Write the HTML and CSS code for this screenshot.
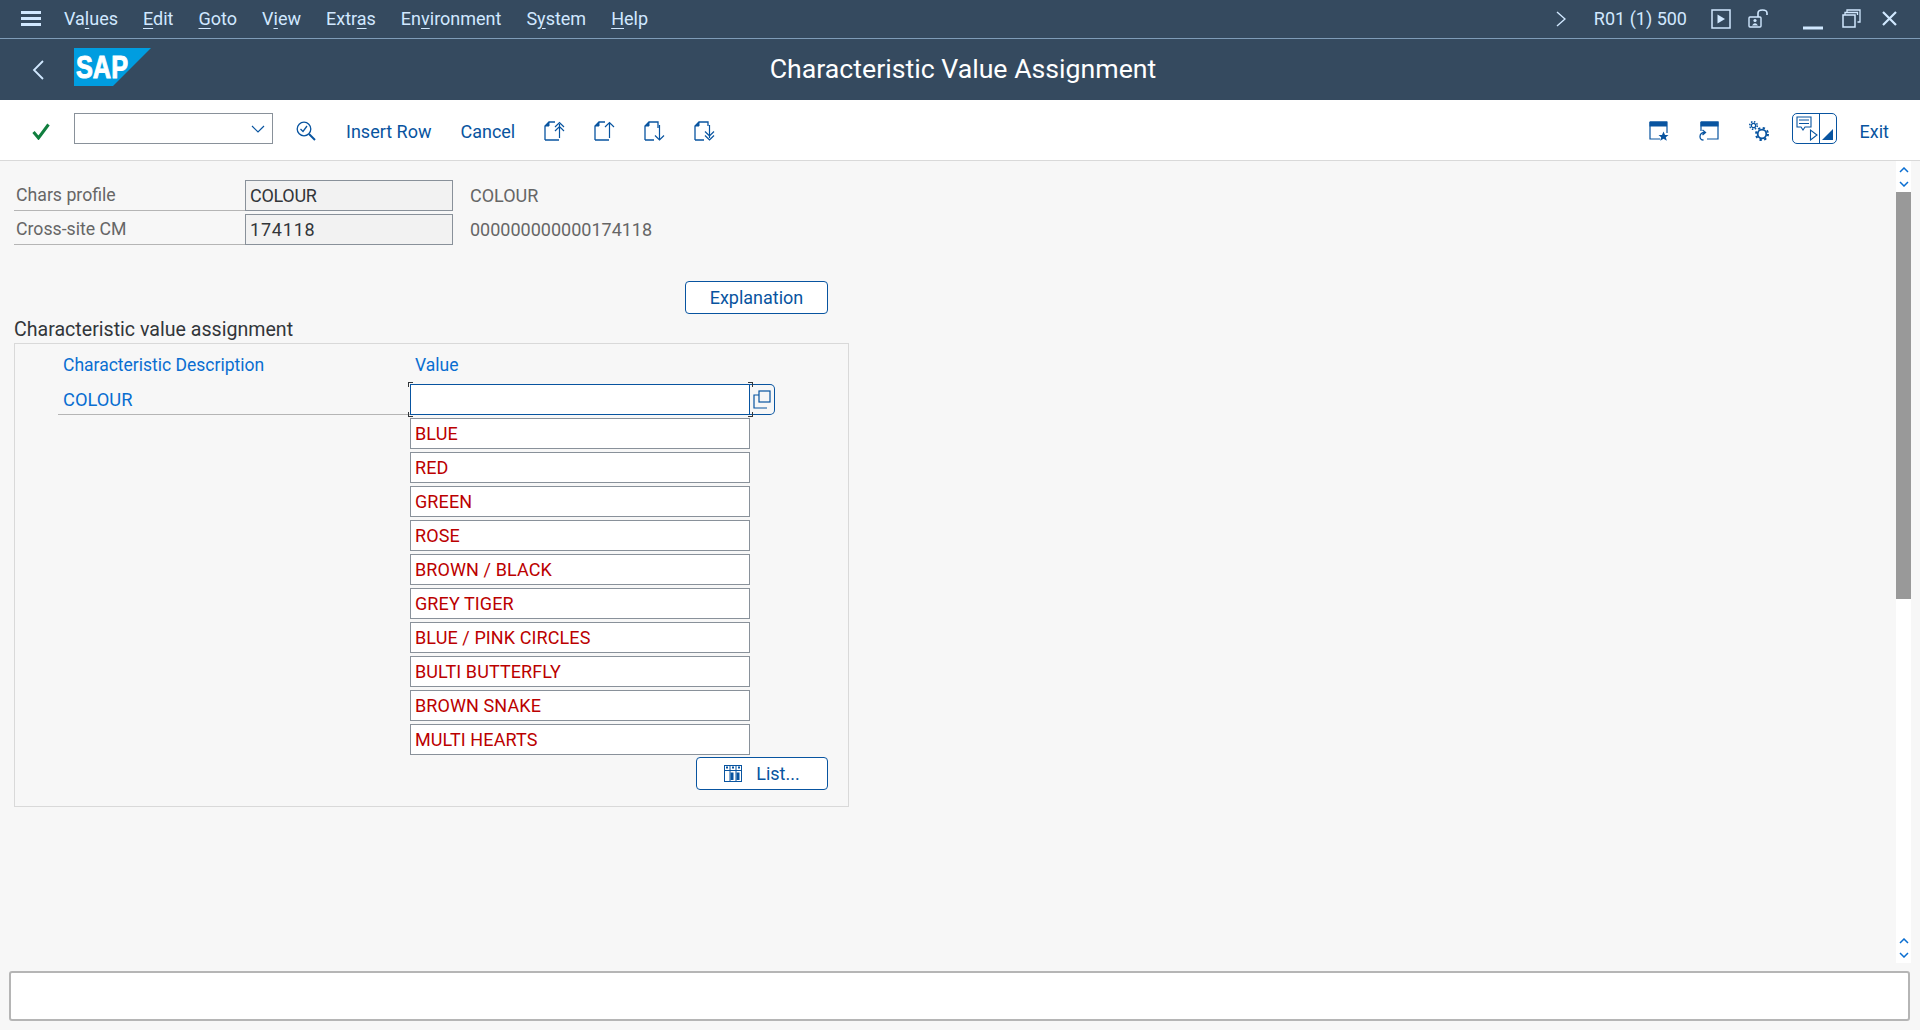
FILE: index.html
```html
<!DOCTYPE html>
<html>
<head>
  <title>Characteristic Value Assignment</title>
  <meta charset="UTF-8">
  <link rel="stylesheet" href="styles.css">
</head>
<body>
  <div class="menubar">
    <svg class="ic-menu" width="20" height="15" viewBox="0 0 20 15"><path d="M0 1.5H20M0 7.5H20M0 13.5H20" stroke="#d1e8ff" stroke-width="3"/></svg>
    <nav class="menu">
      <span>Va<u>l</u>ues</span>
      <span><u>E</u>dit</span>
      <span><u>G</u>oto</span>
      <span>V<u>i</u>ew</span>
      <span>Extr<u>a</u>s</span>
      <span>En<u>v</u>ironment</span>
      <span>S<u>y</u>stem</span>
      <span><u>H</u>elp</span>
    </nav>
    <div class="sysinfo">
      <svg class="ic-more" width="10" height="16" viewBox="0 0 10 16"><path d="M1 1L9 8L1 15" fill="none" stroke="#d1e8ff" stroke-width="1.4"/></svg>
      <span class="sysname">R01 (1) 500</span>
      <svg class="ic-play" width="20" height="20" viewBox="0 0 20 20"><rect x="1" y="1" width="18" height="18" fill="none" stroke="#d1e8ff" stroke-width="1.5"/><path d="M6.500 5.500L14 10L6.500 14.500Z" fill="#d1e8ff"/></svg>
      <svg class="ic-lock" width="20" height="20" viewBox="0 0 20 20"><rect x="1" y="8" width="12" height="10" rx="1" fill="none" stroke="#d1e8ff" stroke-width="1.4"/><circle cx="7" cy="11.500" r="1.600" fill="#d1e8ff"/><path d="M4 16.500Q7 12 10 16.500Z" fill="#d1e8ff"/><path d="M10 8V4Q10 1 14.500 1Q19 1 19 4V6" fill="none" stroke="#d1e8ff" stroke-width="1.600"/></svg>
      <svg class="ic-min" width="20" height="4" viewBox="0 0 20 4"><path d="M0 2H20" stroke="#d1e8ff" stroke-width="3"/></svg>
      <svg class="ic-restore" width="19" height="19" viewBox="0 0 19 19"><rect x="1" y="6" width="12" height="12" fill="none" stroke="#d1e8ff" stroke-width="1.500"/><path d="M5 3.500V1H18V13H15.500M3 6V3.500H15.500V6" fill="none" stroke="#d1e8ff" stroke-width="1.300"/></svg>
      <svg class="ic-close" width="15" height="15" viewBox="0 0 15 15"><path d="M1 1L14 14M14 1L1 14" stroke="#d1e8ff" stroke-width="2.200"/></svg>
    </div>
  </div>

  <div class="titlebar">
    <svg class="ic-back" width="12" height="20" viewBox="0 0 12 20"><path d="M11 1L2 10L11 19" fill="none" stroke="#d1e8ff" stroke-width="1.800"/></svg>
    <svg class="logo" width="77" height="38" viewBox="0 0 77 38"><polygon points="0,0 77,0 39,38 0,38" fill="#009de0"/><text x="2" y="30" textLength="52" lengthAdjust="spacingAndGlyphs">SAP</text></svg>
    <h1>Characteristic Value Assignment</h1>
  </div>

  <div class="toolbar">
    <svg class="ic-check" width="18" height="17" viewBox="0 0 18 17"><path d="M1.500 9L6.500 15L16.500 1.500" fill="none" stroke="#107e3e" stroke-width="3"/></svg>
    <div class="cmd-field">
      <svg width="14" height="8" viewBox="0 0 14 8"><path d="M1 1L7 7L13 1" fill="none" stroke="#0854a0" stroke-width="1.200"/></svg>
    </div>
    <svg class="ic-find" width="20" height="20" viewBox="0 0 20 20"><circle cx="8" cy="8" r="6.800" fill="none" stroke="#0854a0" stroke-width="1.300"/><path d="M4.500 8L7 10.500L11 5" fill="none" stroke="#0854a0" stroke-width="1.300"/><path d="M13 13L19 19" stroke="#0854a0" stroke-width="2"/></svg>
    <a class="tool-text insert">Insert Row</a>
    <a class="tool-text cancel">Cancel</a>
    <svg class="doc first" width="22" height="20" viewBox="0 0 22 20"><path d="M1 19V5L5 1H11M1 19H15" fill="none" stroke="#0854a0" stroke-width="1.300"/><path d="M1 5L5 1V5Z" fill="#0854a0" stroke="#0854a0"/><path d="M15.500 17V3M11 6L15.500 1.500L20 6M11 10L15.500 5.500L20 10" fill="none" stroke="#0854a0" stroke-width="1.200"/></svg>
    <svg class="doc" width="22" height="20" viewBox="0 0 22 20"><path d="M1 19V5L5 1H11M1 19H15" fill="none" stroke="#0854a0" stroke-width="1.300"/><path d="M1 5L5 1V5Z" fill="#0854a0" stroke="#0854a0"/><path d="M15.500 17V1.500M11 6L15.500 1.500L20 6" fill="none" stroke="#0854a0" stroke-width="1.200"/></svg>
    <svg class="doc" width="22" height="20" viewBox="0 0 22 20"><path d="M1 19V5L5 1H14V7M1 19H10" fill="none" stroke="#0854a0" stroke-width="1.300"/><path d="M1 5L5 1V5Z" fill="#0854a0" stroke="#0854a0"/><path d="M15.500 4V19M11 14.500L15.500 19L20 14.500" fill="none" stroke="#0854a0" stroke-width="1.200"/></svg>
    <svg class="doc" width="22" height="20" viewBox="0 0 22 20"><path d="M1 19V5L5 1H14V5M1 19H10" fill="none" stroke="#0854a0" stroke-width="1.300"/><path d="M1 5L5 1V5Z" fill="#0854a0" stroke="#0854a0"/><path d="M15.500 4V17M11 10.500L15.500 15L20 10.500M11 14.500L15.500 19L20 14.500" fill="none" stroke="#0854a0" stroke-width="1.200"/></svg>

    <svg class="win star" width="20" height="20" viewBox="0 0 20 20"><path d="M1 1H18V12M1 1V18H11" fill="none" stroke="#0854a0" stroke-width="1.200"/><rect x="0.500" y="0.500" width="17.500" height="5" fill="#0854a0"/><path d="M14.500 10.500L16 14H19.500L16.800 16.200L17.800 19.800L14.500 17.800L11.200 19.800L12.200 16.200L9.500 14H13Z" fill="#0854a0"/></svg>
    <svg class="win" width="20" height="20" viewBox="0 0 20 20"><path d="M2 1H19V18H8M2 1V10" fill="none" stroke="#0854a0" stroke-width="1.200"/><rect x="1.500" y="0.500" width="18" height="5" fill="#0854a0"/><path d="M6 11.500Q1 11.500 1 15.500Q1 19 4.500 19M3.500 9L6.500 11.500L3.500 14" fill="none" stroke="#0854a0" stroke-width="1.300"/></svg>
    <svg class="win" width="20" height="20" viewBox="0 0 20 20"><circle cx="4.500" cy="4.500" r="2.200" fill="none" stroke="#0854a0" stroke-width="1.300"/><circle cx="4.500" cy="4.500" r="3.800" fill="none" stroke="#0854a0" stroke-width="1.500" stroke-dasharray="1.500 1.480"/><circle cx="13" cy="13" r="4.300" fill="none" stroke="#0854a0" stroke-width="1.800"/><circle cx="13" cy="13" r="6" fill="none" stroke="#0854a0" stroke-width="2" stroke-dasharray="2.300 2.412"/></svg>
    <div class="layout-btn">
      <div class="layout-left">
        <svg width="24" height="25" viewBox="0 0 24 25"><path d="M1 1H15V11H9L7 14L5 11H1Z" fill="none" stroke="#0854a0" stroke-width="1.100"/><path d="M3 4H13M3 7.500H13" stroke="#0854a0" stroke-width="1"/><path d="M14.500 14V24L21 19Z" fill="none" stroke="#0854a0" stroke-width="1.100"/></svg>
      </div>
      <svg class="corner" width="11" height="11" viewBox="0 0 11 11"><path d="M0 11L11 0V11Z" fill="#0854a0"/></svg>
    </div>
    <a class="tool-text exit">Exit</a>
  </div>

  <div class="main">
    <div class="content">
      <div class="field-row">
        <label>Chars profile</label>
        <div class="ro-input">COLOUR</div>
        <span class="ro-text">COLOUR</span>
      </div>
      <div class="field-row">
        <label>Cross-site CM</label>
        <div class="ro-input num">174118</div>
        <span class="ro-text">000000000000174118</span>
      </div>
      <div class="btn-line"><a class="btn explain">Explanation</a></div>
      <div class="group-title">Characteristic value assignment</div>
      <div class="group">
        <div class="value-grid">
          <div class="head">Characteristic Description</div>
          <div class="head value-head">Value</div>
          <div class="char-name">COLOUR</div>
          <div class="value-cell focus"></div>
          <div class="f4">
            <svg width="18" height="20" viewBox="0 0 18 20"><rect x="6" y="1" width="11" height="11" fill="none" stroke="#0854a0" stroke-width="1.200"/><path d="M6 5H1V18H14" fill="none" stroke="#0854a0" stroke-width="1.200"/></svg>
          </div>
          <div class="value-cell item">BLUE</div>
          <div class="value-cell item">RED</div>
          <div class="value-cell item">GREEN</div>
          <div class="value-cell item">ROSE</div>
          <div class="value-cell item">BROWN / BLACK</div>
          <div class="value-cell item">GREY TIGER</div>
          <div class="value-cell item">BLUE / PINK CIRCLES</div>
          <div class="value-cell item">BULTI BUTTERFLY</div>
          <div class="value-cell item">BROWN SNAKE</div>
          <div class="value-cell item">MULTI HEARTS</div>
        </div>
        <div class="btn-line list-line">
          <a class="btn list">
            <svg width="18" height="17" viewBox="0 0 18 17"><rect x="0.500" y="0.500" width="17" height="16" fill="none" stroke="#0854a0"/><path d="M0 5.500H18M6 0V17M12 0V17" stroke="#0854a0"/><path d="M2 2.500H4M8 2.500H10M14 2.500H16" stroke="#0854a0" stroke-width="2"/><path d="M8 7.500V15M14 7.500V15" stroke="#0854a0" stroke-width="3"/></svg>
            List...
          </a>
        </div>
      </div>
    </div>
    <div class="scrollbar">
      <div class="arrows">
        <svg width="10" height="6" viewBox="0 0 10 6"><path d="M1 5L5 1L9 5" fill="none" stroke="#0a6ed1" stroke-width="1.500"/></svg>
        <svg width="10" height="6" viewBox="0 0 10 6"><path d="M1 1L5 5L9 1" fill="none" stroke="#0a6ed1" stroke-width="1.500"/></svg>
      </div>
      <div class="thumb"></div>
      <div class="arrows bottom">
        <svg width="10" height="6" viewBox="0 0 10 6"><path d="M1 5L5 1L9 5" fill="none" stroke="#0a6ed1" stroke-width="1.500"/></svg>
        <svg width="10" height="6" viewBox="0 0 10 6"><path d="M1 1L5 5L9 1" fill="none" stroke="#0a6ed1" stroke-width="1.500"/></svg>
      </div>
    </div>
  </div>

  <div class="statusbar"><div class="status-box"></div></div>
</body>
</html>
```

FILE: styles.css
```css
* {
  box-sizing: border-box;
}
body {
  margin: 0;
  height: 100vh;
  display: flex;
  flex-direction: column;
  overflow: hidden;
  background: #f7f7f7;
  font-family: Roboto, "Noto Sans", Arial, sans-serif;
  font-size: 18px;
  color: #32363a;
}
svg {
  display: block;
  flex: none;
}

/* top bars */
.menubar {
  height: 39px;
  flex: none;
  display: flex;
  align-items: center;
  padding: 0 23px 1px 21px;
  background: #354a5f;
  border-bottom: 1px solid #7f9cb8;
  color: #d1e8ff;
}
.menu {
  display: flex;
  gap: 25px;
  margin-left: 23px;
}
.menu u {
  text-underline-offset: 3px;
}
.sysinfo {
  margin-left: auto;
  display: flex;
  align-items: center;
}
.sysname {
  margin-left: 28px;
}
.ic-play {
  margin-left: 24px;
}
.ic-lock {
  margin-left: 17px;
}
.ic-min {
  margin-left: 35px;
  margin-top: 18px;
}
.ic-restore {
  margin-left: 19px;
}
.ic-close {
  margin-left: 21px;
}
.titlebar {
  height: 61px;
  flex: none;
  position: relative;
  display: flex;
  align-items: center;
  padding-left: 32px;
  background: #354a5f;
}
.logo {
  margin-left: 30px;
  margin-top: -5px;
}
.logo text {
  font-family: "Liberation Sans", Arial, sans-serif;
  font-weight: bold;
  font-size: 31px;
  fill: #fff;
  stroke: #fff;
  stroke-width: 1px;
}
.titlebar h1 {
  position: absolute;
  left: 0;
  right: 0;
  top: 15px;
  margin: 0;
  padding-left: 6px;
  text-align: center;
  font-size: 26.700px;
  line-height: 30px;
  font-weight: 400;
  color: #fff;
}

/* toolbar */
.toolbar {
  height: 61px;
  flex: none;
  display: flex;
  align-items: center;
  padding: 2px 31px 0 32px;
  background: #fff;
  border-bottom: 1px solid #d9d9d9;
  color: #0854a0;
}
.cmd-field {
  width: 199px;
  height: 31px;
  margin-left: 24px;
  margin-top: -6px;
  display: flex;
  align-items: center;
  justify-content: flex-end;
  padding: 2px 7px 0 0;
  background: #fff;
  border: 1px solid #89919a;
}
.ic-find {
  margin-left: 23px;
}
.tool-text.insert {
  margin-left: 30px;
}
.tool-text.cancel {
  margin-left: 29px;
}
.doc {
  margin-left: 28px;
}
.doc.first {
  margin-left: 29px;
}
.win {
  margin-left: 30px;
}
.win.star {
  margin-left: auto;
}
.layout-btn {
  width: 45px;
  height: 31px;
  margin-left: 23px;
  margin-top: -5px;
  display: flex;
  background: #fff;
  border: 1px solid #0854a0;
  border-radius: 5px;
}
.layout-left {
  width: 27px;
  padding: 2px 0 0 3px;
  border-right: 1px solid #0854a0;
}
.corner {
  margin: 15px 0 0 2px;
}
.tool-text.exit {
  margin-left: 23px;
}

/* main area */
.main {
  flex: 1;
  display: flex;
  justify-content: space-between;
  min-height: 0;
  padding-right: 9px;
}
.content {
  width: 849px;
  padding: 19px 0 0 14px;
}
.field-row {
  display: flex;
  align-items: center;
  height: 31px;
  margin-bottom: 3px;
}
.field-row label {
  width: 231px;
  height: 31px;
  line-height: 31px;
  padding-left: 2px;
  font-size: 17.700px;
  color: #666;
  border-bottom: 1px solid #b5b5b5;
}
.ro-input {
  width: 208px;
  height: 31px;
  line-height: 29px;
  padding-left: 4px;
  background: #f2f2f2;
  border: 1px solid #89919a;
  letter-spacing: -0.300px;
}
.ro-input.num {
  letter-spacing: 0.800px;
}
.ro-text {
  margin-left: 17px;
  color: #666;
}
.btn-line {
  display: flex;
  justify-content: flex-end;
  width: 814px;
}
.btn {
  height: 33px;
  display: flex;
  align-items: center;
  justify-content: center;
  background: #fff;
  border: 1px solid #0854a0;
  border-radius: 4px;
  color: #0854a0;
}
.btn.explain {
  width: 143px;
  margin-top: 33px;
}
.group-title {
  height: 29px;
  line-height: 31px;
  font-size: 19.600px;
}
.group {
  width: 835px;
  height: 464px;
  padding: 6px 20px 0 43px;
  border: 1px solid #d9d9d9;
}
.value-grid {
  display: grid;
  grid-template-columns: 352px 340px 25px;
  grid-auto-rows: 31px;
  row-gap: 3px;
}
.head,
.char-name {
  line-height: 31px;
  padding-left: 5px;
  color: #0a6ed1;
}
.head {
  font-size: 17.500px;
}
.value-head {
  grid-column: 2 / span 2;
}
.char-name {
  border-bottom: 1px solid #b5b5b5;
  height: 31px;
  font-size: 18.300px;
}
.value-cell {
  grid-column: 2;
  position: relative;
  padding-left: 4px;
  line-height: 29px;
  background: #fff;
  border: 1px solid #89919a;
}
.value-cell.item {
  color: #b00;
  letter-spacing: 0.100px;
}
.value-cell.focus {
  border-color: #0854a0;
  border-width: 1.500px;
}
.value-cell.focus::before {
  content: "";
  position: absolute;
  inset: -3px -4px -3px -3px;
  background:
    linear-gradient(#32363a, #32363a) left top / 5px 1px no-repeat,
    linear-gradient(#32363a, #32363a) left top / 1px 5px no-repeat,
    linear-gradient(#32363a, #32363a) right top / 5px 1px no-repeat,
    linear-gradient(#32363a, #32363a) right top / 1px 5px no-repeat,
    linear-gradient(#32363a, #32363a) left bottom / 5px 1px no-repeat,
    linear-gradient(#32363a, #32363a) left bottom / 1px 5px no-repeat,
    linear-gradient(#32363a, #32363a) right bottom / 5px 1px no-repeat,
    linear-gradient(#32363a, #32363a) right bottom / 1px 5px no-repeat;
}
.f4 {
  display: flex;
  align-items: center;
  justify-content: center;
  border: 1px solid #0854a0;
  border-left: 0;
  border-radius: 0 5px 5px 0;
}
.list-line {
  width: 100%;
  margin-top: 2px;
}
.btn.list {
  width: 132px;
  gap: 14px;
}

/* scrollbar */
.scrollbar {
  width: 15px;
  display: flex;
  flex-direction: column;
  align-items: center;
  background: #fff;
}
.arrows {
  height: 31px;
  flex: none;
  display: flex;
  flex-direction: column;
  align-items: center;
  justify-content: flex-end;
  gap: 8px;
  padding-bottom: 5px;
}
.arrows.bottom {
  margin-top: auto;
  height: 36px;
}
.thumb {
  width: 15px;
  height: 407px;
  background: #999;
}

/* status */
.statusbar {
  height: 67px;
  flex: none;
  padding: 8px 10px 9px 9px;
}
.status-box {
  height: 50px;
  background: #fff;
  border: 2px solid #b5b5b5;
  border-radius: 3px;
}
```
